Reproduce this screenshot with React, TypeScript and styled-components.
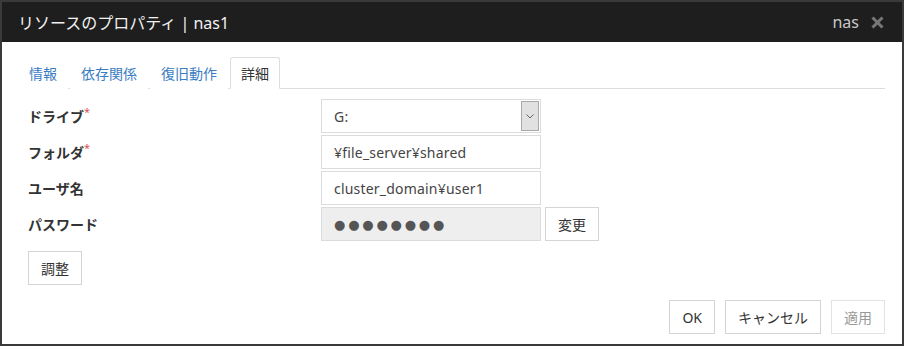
import styled, { createGlobalStyle } from "styled-components";

const GlobalStyle = createGlobalStyle`
  html, body {
    margin: 0;
    padding: 0;
    background: #ffffff;
  }
  body {
    font-family: "Noto Sans", "Noto Sans CJK JP", sans-serif;
    color: #333333;
  }
`;

const Dialog = styled.div`
  box-sizing: border-box;
  width: 904px;
  height: 346px;
  border: 2px solid #3a3a3a;
  display: flex;
  flex-direction: column;
  background: #ffffff;
`;

const TitleBar = styled.div`
  height: 40px;
  background: #1e1e1e;
  display: flex;
  align-items: center;
  padding: 0 18px 0 16px;
`;

const Title = styled.h1`
  margin: 0;
  flex: 1;
  font-size: 16px;
  font-weight: 400;
  color: #f2f2f2;
`;

const TitleTag = styled.span`
  font-size: 16px;
  color: #c8c8c8;
  margin-right: 12px;
`;

const CloseIcon = styled.svg`
  width: 13px;
  height: 13px;
  display: block;
`;

const Body = styled.div`
  flex: 1;
  display: flex;
  flex-direction: column;
  padding: 15px 17px 10px 16px;
`;

const Tabs = styled.div`
  display: flex;
  border-bottom: 1px solid #dddddd;
  height: 31px;
`;

const Tab = styled.div<{ active?: boolean }>`
  box-sizing: border-box;
  height: 32px;
  padding: 0 10px;
  margin-right: 2px;
  display: flex;
  align-items: center;
  font-size: 14px;
  color: ${(p) => (p.active ? "#333333" : "#3b7cc2")};
  background: #ffffff;
  border: 1px solid ${(p) => (p.active ? "#dddddd" : "transparent")};
  border-bottom-color: ${(p) => (p.active ? "#ffffff" : "transparent")};
  border-radius: 3px 3px 0 0;
`;

const Form = styled.div`
  margin-top: 10px;
  padding-left: 10px;
  display: grid;
  grid-template-columns: 293px 220px auto;
  row-gap: 2px;
  align-items: center;
`;

const Label = styled.label`
  font-size: 14px;
  font-weight: 700;
  color: #333333;
`;

const Required = styled.sup`
  color: #d9534f;
  font-size: 11px;
  font-weight: 400;
  vertical-align: top;
  position: relative;
  top: -2px;
`;

const Field = styled.div<{ disabled?: boolean }>`
  box-sizing: border-box;
  height: 34px;
  border: 1px solid #dcdcdc;
  background: ${(p) => (p.disabled ? "#eeeeee" : "#ffffff")};
  display: flex;
  align-items: center;
  padding-left: 12px;
  font-size: 14px;
  letter-spacing: 0.2px;
  color: #444444;
`;

const SelectField = styled(Field)`
  padding-right: 1px;
  justify-content: space-between;
`;

const SelectArrow = styled.div`
  box-sizing: border-box;
  width: 18px;
  height: 30px;
  background: #e1e1e1;
  border: 1px solid #a8a8a8;
  display: flex;
  align-items: center;
  justify-content: center;
`;

const Dots = styled.span`
  font-family: "DejaVu Sans", sans-serif;
  font-size: 13px;
  letter-spacing: 2.8px;
  color: #555555;
`;

const Cell = styled.div`
  display: flex;
  align-items: center;
`;

const Button = styled.button<{ disabled?: boolean }>`
  box-sizing: border-box;
  height: 34px;
  padding: 0 12px;
  background: #ffffff;
  border: 1px solid #d4d4d4;
  font-family: inherit;
  font-size: 14px;
  color: ${(p) => (p.disabled ? "#999999" : "#333333")};
  border-color: ${(p) => (p.disabled ? "#e3e3e3" : "#d4d4d4")};
`;

const SideButton = styled(Button)`
  margin-left: 4px;
`;

const AdjustRow = styled.div`
  margin-top: 10px;
  padding-left: 10px;
`;

const Footer = styled.div`
  margin-top: auto;
  display: flex;
  justify-content: flex-end;
  gap: 10px;
`;

const tabs = ["情報", "依存関係", "復旧動作", "詳細"];

function App() {
  return (
    <>
      <GlobalStyle />
      <Dialog>
        <TitleBar>
          <Title>リソースのプロパティ | nas1</Title>
          <TitleTag>nas</TitleTag>
          <CloseIcon viewBox="0 0 13 13">
            <path d="M1.5 1.5 L11.5 11.5 M11.5 1.5 L1.5 11.5" stroke="#777" strokeWidth="3" />
          </CloseIcon>
        </TitleBar>
        <Body>
          <Tabs>
            {tabs.map((t) => (
              <Tab key={t} active={t === "詳細"}>
                {t}
              </Tab>
            ))}
          </Tabs>
          <Form>
            <Label>
              ドライブ<Required>*</Required>
            </Label>
            <SelectField>
              G:
              <SelectArrow>
                <svg width="8" height="5" viewBox="0 0 8 5">
                  <path d="M0.5 0.5 L4 4 L7.5 0.5" fill="none" stroke="#666" strokeWidth="1" />
                </svg>
              </SelectArrow>
            </SelectField>
            <span />
            <Label>
              フォルダ<Required>*</Required>
            </Label>
            <Field>¥file_server¥shared</Field>
            <span />
            <Label>ユーザ名</Label>
            <Field>cluster_domain¥user1</Field>
            <span />
            <Label>パスワード</Label>
            <Field disabled>
              <Dots>●●●●●●●●</Dots>
            </Field>
            <Cell>
              <SideButton>変更</SideButton>
            </Cell>
          </Form>
          <AdjustRow>
            <Button>調整</Button>
          </AdjustRow>
          <Footer>
            <Button>OK</Button>
            <Button>キャンセル</Button>
            <Button disabled>適用</Button>
          </Footer>
        </Body>
      </Dialog>
    </>
  );
}

export default App;
